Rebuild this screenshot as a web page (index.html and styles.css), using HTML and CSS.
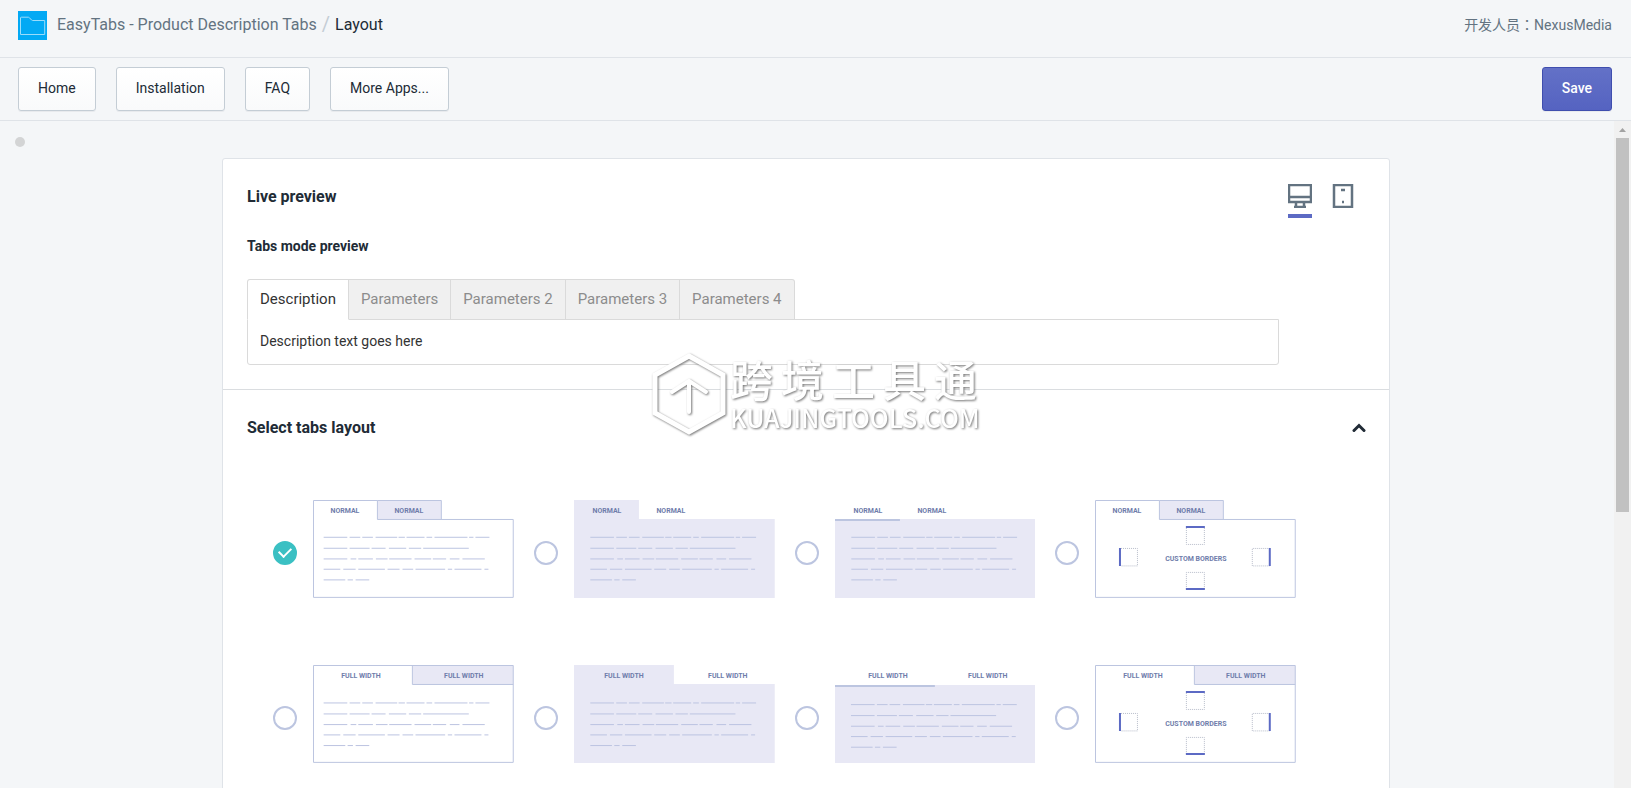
FILE: index.html
```html
<!DOCTYPE html>
<html lang="en">
<head>
<meta charset="utf-8">
<title>EasyTabs - Layout</title>
<link rel="stylesheet" href="styles.css">
</head>
<body>
<svg class="defs" aria-hidden="true">
  <defs>
    <g id="lines">
      <path d="M0 0H71M78 0H110M116 0H148M156 0H221M225 0H244M249 0H303M309 0H326M333 0H432M437 0H450M456 0H498"/>
      <path d="M0 33H71M78 33H138M144 33H186M196 33H248M256 33H293M299 33H436"/>
      <path d="M0 65H71M81 65H98M104 65H148M157 65H192M197 65H264M273 65H323M328 65H368M379 65H408M417 65H484"/>
      <path d="M0 96H50M59 96H96M104 96H184M192 96H228M237 96H269M276 96H365M373 96H386M393 96H474M483 96H495"/>
      <path d="M0 128H65M72 128H88M96 128H137"/>
    </g>
    <g id="borders">
      <path class="dots" d="M91.500 28v16.500h18V28M26 48.500h16.500v17.500H26M175 48.500h-17.500v17.500H175M91.500 89V72.500h18V89"/>
      <path class="accent" d="M91 27h19M25 48v18M175 48v18M91 89h19"/>
    </g>
  </defs>
</svg>

<header class="topbar">
  <svg class="logo" viewBox="0 0 29 29" aria-hidden="true"><rect width="29" height="29" fill="#03a9f4"/><path d="M2.500 23.500V7q0-.8.8-.8h7q.7 0 1.200.6l2 2.200q.4.500 1.200.500h12v14z" fill="none" stroke="#9bdcfb"/></svg>
  <nav class="crumbs"><a href="#">EasyTabs - Product Description Tabs</a><span class="slash">/</span><span class="current">Layout</span></nav>
  <span class="developer">开发人员：NexusMedia</span>
</header>

<div class="toolbar">
  <button class="btn" type="button">Home</button>
  <button class="btn" type="button">Installation</button>
  <button class="btn" type="button">FAQ</button>
  <button class="btn" type="button">More Apps...</button>
  <button class="btn primary" type="button">Save</button>
</div>

<div class="viewport">
  <main class="content">
    <span class="dot"></span>
    <div class="card">
      <section class="preview">
        <div class="preview-head">
          <h2>Live preview</h2>
          <div class="devices">
            <button class="device active" type="button" aria-label="Desktop"><svg viewBox="0 0 24 24"><path d="M1 1h22v17H1zM1 13h22M8 18v5M16 18v5M6 23h12" /></svg></button>
            <button class="device" type="button" aria-label="Mobile"><svg viewBox="0 0 24 24"><path d="M3 1h18v22H3zM10 6h4M11 18h2"/></svg></button>
          </div>
        </div>
        <h3>Tabs mode preview</h3>
        <div class="tabs" role="tablist">
          <button class="tab selected" role="tab" type="button">Description</button>
          <button class="tab" role="tab" type="button">Parameters</button>
          <button class="tab" role="tab" type="button">Parameters 2</button>
          <button class="tab" role="tab" type="button">Parameters 3</button>
          <button class="tab" role="tab" type="button">Parameters 4</button>
        </div>
        <div class="panel" role="tabpanel">Description text goes here</div>
      </section>

      <section class="layouts">
        <div class="layouts-head">
          <h2>Select tabs layout</h2>
          <button class="collapse" type="button" aria-label="Collapse"><svg viewBox="0 0 14 10"><path d="M2 7.500L7 2.500l5 5"/></svg></button>
        </div>
        <div class="options">
          <label class="option"><input type="radio" name="layout" aria-label="Normal, bordered" checked>
            <svg class="thumb" viewBox="0 0 201 98"><path class="fill" d="M64.500.5h64v19h-64z"/><path class="frame" d="M64.500 19.500V.5h64v19M64.500.5H.5v97h200v-78h-136"/><text x="32" y="13">NORMAL</text><text x="96" y="13">NORMAL</text><use href="#lines" x="32" y="112"/></svg></label>
          <label class="option"><input type="radio" name="layout" aria-label="Normal, filled">
            <svg class="thumb" viewBox="0 0 201 98"><path class="fill" d="M0 0h65v19h136v79H0z"/><text x="33" y="13">NORMAL</text><text x="97" y="13">NORMAL</text><use href="#lines" x="49" y="112"/></svg></label>
          <label class="option"><input type="radio" name="layout" aria-label="Normal, underlined">
            <svg class="thumb" viewBox="0 0 201 98"><path class="fill" d="M0 19h201v79H0z"/><path class="under" d="M0 20h65"/><text x="33" y="13">NORMAL</text><text x="97" y="13">NORMAL</text><use href="#lines" x="49" y="112"/></svg></label>
          <label class="option"><input type="radio" name="layout" aria-label="Normal, custom borders">
            <svg class="thumb" viewBox="0 0 201 98"><path class="fill" d="M64.500.5h64v19h-64z"/><path class="frame" d="M64.500 19.500V.5h64v19M64.500.5H.5v97h200v-78h-136"/><text x="32" y="13">NORMAL</text><text x="96" y="13">NORMAL</text><text x="101" y="61">CUSTOM BORDERS</text><use href="#borders"/></svg></label>
          <label class="option"><input type="radio" name="layout" aria-label="Full width, bordered">
            <svg class="thumb" viewBox="0 0 201 98"><path class="fill" d="M99.500.5h101v19h-101z"/><path class="frame" d="M.5.5h200v97H.5zM99.500.5v19h101"/><text x="48" y="13">FULL WIDTH</text><text x="151" y="13">FULL WIDTH</text><use href="#lines" x="32" y="114"/></svg></label>
          <label class="option"><input type="radio" name="layout" aria-label="Full width, filled">
            <svg class="thumb" viewBox="0 0 201 98"><path class="fill" d="M0 0h100v19h101v79H0z"/><text x="50" y="13">FULL WIDTH</text><text x="154" y="13">FULL WIDTH</text><use href="#lines" x="49" y="114"/></svg></label>
          <label class="option"><input type="radio" name="layout" aria-label="Full width, underlined">
            <svg class="thumb" viewBox="0 0 201 98"><path class="fill" d="M0 20h201v78H0z"/><path class="under" d="M0 21h100"/><text x="53" y="13">FULL WIDTH</text><text x="153" y="13">FULL WIDTH</text><use href="#lines" x="48" y="119"/></svg></label>
          <label class="option"><input type="radio" name="layout" aria-label="Full width, custom borders">
            <svg class="thumb" viewBox="0 0 201 98"><path class="fill" d="M99.500.5h101v19h-101z"/><path class="frame" d="M.5.5h200v97H.5zM99.500.5v19h101"/><text x="48" y="13">FULL WIDTH</text><text x="151" y="13">FULL WIDTH</text><text x="101" y="61">CUSTOM BORDERS</text><use href="#borders"/></svg></label>
        </div>
      </section>
    </div>
  </main>
  <div class="scrollbar" aria-hidden="true"><svg class="arrow" viewBox="0 0 17 17"><path d="M5 11l3.500-4 3.500 4z" fill="#a3a3a3"/></svg><div class="grip"></div></div>
</div>

<div class="watermark">
  <svg class="hex" viewBox="0 0 76 84"><path d="M38 3L72 22V60L38 79L4 60V22Z"/><path class="up" d="M38 59V30M21 39L38 28L55 39"/></svg>
  <div class="brand">
    <div class="brand-cn"><span>跨</span><span>境</span><span>工</span><span>具</span><span>通</span></div>
    <div class="brand-en">KUAJINGTOOLS.COM</div>
  </div>
</div>
</body>
</html>
```
FILE: styles.css
```css
* { box-sizing: border-box; }
body {
  margin: 0;
  height: 100vh;
  display: flex;
  flex-direction: column;
  overflow: hidden;
  background: #f4f6f8;
  color: #212b36;
  font: 14px/20px Roboto, "Noto Sans CJK TC", sans-serif;
}
button { font: inherit; cursor: pointer; }
h2, h3 { margin: 0; font-weight: 700; }
h2 { font-size: 16px; line-height: 24px; }
h3 { font-size: 14px; line-height: 20px; }
.defs { display: none; }

.topbar {
  display: flex;
  align-items: flex-start;
  padding: 11px 19px 17px 18px;
  border-bottom: 1px solid #dfe3e8;
}
.logo { width: 29px; height: 29px; }
.crumbs { display: flex; margin-left: 10px; font-size: 16px; line-height: 28px; }
.crumbs a { color: #637381; text-decoration: none; }
.slash { margin: 0 5px; font-size: 20px; line-height: 26px; color: #c4cdd5; }
.developer { margin-left: auto; line-height: 28px; color: #637381; }

.toolbar {
  display: flex;
  gap: 20px;
  padding: 9px 19px 9px 18px;
  border-bottom: 1px solid #dfe3e8;
}
.btn {
  height: 44px;
  padding: 0 19px 2px;
  border: 1px solid #c4cdd5;
  border-radius: 3px;
  background: linear-gradient(#fff, #f9fafb);
  box-shadow: 0 1px 0 rgba(22, 29, 37, .05);
  color: #212b36;
}
.primary {
  margin-left: auto;
  border-color: #3f4eae;
  background: linear-gradient(#6371c7, #5563c1);
  color: #fff;
  font-weight: 500;
}

.viewport { flex: 1; min-height: 0; display: flex; }
.content { flex: 1; overflow: hidden; padding: 16px 17px 0 15px; }
.dot { display: block; width: 10px; height: 10px; border-radius: 50%; background: #d3d4d5; }
.card {
  max-width: 1168px;
  margin: 11px auto 0;
  border: 1px solid #dfe3e8;
  border-radius: 3px;
  background: #fff;
}
.preview { padding: 24px; border-bottom: 1px solid #dadde0; }
.preview-head { display: flex; justify-content: space-between; align-items: flex-start; height: 53px; }
.preview-head h2 { padding-top: 2px; }
.devices { display: flex; gap: 19px; padding: 1px 10px 0 0; }
.device { height: 34px; padding: 0; border: 0; border-bottom: 4px solid transparent; background: none; }
.active { border-color: #5c6ac4; }
.device svg { display: block; width: 24px; height: 24px; margin-bottom: 6px; fill: none; stroke: #637381; stroke-width: 2.5; }
.tabs { display: flex; margin-top: 23px; }
.tab {
  height: 41px;
  margin-bottom: -1px;
  padding: 0 12px 1px;
  border: 1px solid #dadada;
  border-left: 0;
  background: #f0f0f0;
  color: #8c8c8c;
  font-size: 15px;
}
.tab:first-child { border-left: 1px solid #dadada; border-top-left-radius: 3px; }
.tab:last-child { border-top-right-radius: 3px; }
.tab.selected { position: relative; border-bottom-color: #fff; background: #fff; color: #333; }
.panel {
  max-width: 1032px;
  padding: 11px 12px 13px;
  border: 1px solid #dadada;
  border-radius: 0 0 3px 3px;
  color: #333;
}

.layouts { padding: 26px 23px 67px 24px; }
.layouts-head { display: flex; justify-content: space-between; align-items: center; }
.collapse { display: flex; padding: 0; border: 0; background: none; }
.collapse svg { width: 14px; height: 10px; fill: none; stroke: #212b36; stroke-width: 3; stroke-linecap: round; }
.options {
  display: grid;
  grid-template-columns: repeat(4, minmax(0, 1fr));
  row-gap: 67px;
  margin-top: 60px;
  padding: 0 50px 0 26px;
}
.option { display: flex; align-items: center; gap: 16px; padding-right: 20px; }
.option input {
  appearance: none;
  flex: none;
  display: grid;
  place-items: center;
  width: 24px;
  height: 24px;
  margin: 8px 0 0;
  border: 2px solid #bcc5e0;
  border-radius: 50%;
}
.option input:checked { border-color: #3bc0c3; background: #3bc0c3; }
.option input:checked::after {
  content: "";
  width: 10px;
  height: 6px;
  margin-bottom: 3px;
  border: solid #fff;
  border-width: 0 0 2px 2px;
  transform: rotate(-45deg);
}
.thumb { flex: 1; min-width: 0; font-size: 7px; font-weight: 700; }
.thumb text { fill: #6f7dab; text-anchor: middle; }
.thumb use[href="#lines"] { stroke: #bcc4e1; stroke-width: 3; transform: scale(.3333); transform-origin: 0 0; }
.fill { fill: #e8e8f5; }
.frame { fill: none; stroke: #bcc5e0; }
.under { stroke: #bcc5e0; stroke-width: 2; }
.dots { fill: none; stroke: #b8bdca; stroke-width: 1; stroke-dasharray: 1 1; }
.accent { stroke: #5c6ac4; stroke-width: 2; }

.scrollbar { flex: none; width: 17px; background: #f1f1f1; }
.arrow { display: block; width: 17px; height: 17px; }
.grip { height: 56%; margin: 0 2px; background: #c1c1c1; }

.watermark {
  position: absolute;
  left: 651px;
  top: 353px;
  display: flex;
  align-items: flex-start;
  gap: 3px;
  pointer-events: none;
  color: #fff;
  font-family: "Noto Sans CJK SC", sans-serif;
  filter: drop-shadow(1px 1px 1px #777);
}
.hex { width: 76px; height: 84px; fill: none; stroke: #fff; stroke-width: 5; stroke-linecap: round; }
.up { stroke-width: 4; }
.brand-cn { display: flex; gap: 8px; font-size: 43px; line-height: 50px; font-weight: 500; }
.brand-en { font-size: 25px; line-height: 28px; font-weight: 500; }
```
